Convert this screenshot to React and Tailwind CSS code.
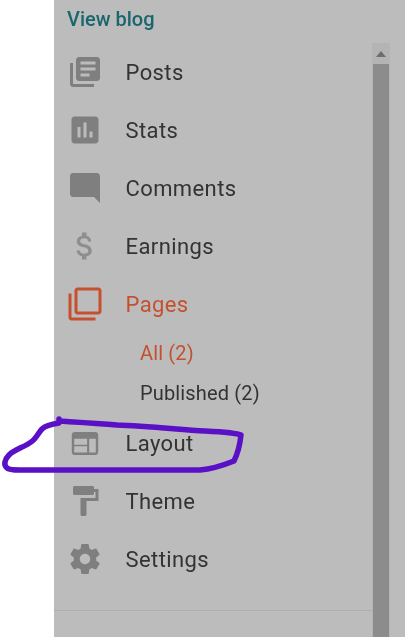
import React from 'react';

const icons = {
  posts: 'M4 6H2v14c0 1.1.9 2 2 2h14v-2H4V6zm16-4H8c-1.1 0-2 .9-2 2v12c0 1.1.9 2 2 2h12c1.1 0 2-.9 2-2V4c0-1.1-.9-2-2-2zm-1 9H9V9h10v2zm-4 4H9v-2h6v2zm4-8H9V5h10v2z',
  stats: 'M19 3H5c-1.1 0-2 .9-2 2v14c0 1.1.9 2 2 2h14c1.1 0 2-.9 2-2V5c0-1.1-.9-2-2-2zM9 17H7v-7h2v7zm4 0h-2V7h2v10zm4 0h-2v-4h2v4z',
  comments: 'M21.99 4c0-1.1-.89-2-1.99-2H4c-1.1 0-2 .9-2 2v12c0 1.1.9 2 2 2h14l4 4-.01-18z',
  earnings: 'M11.8 10.9c-2.27-.59-3-1.2-3-2.15 0-1.09 1.01-1.85 2.7-1.85 1.78 0 2.44.85 2.5 2.1h2.21c-.07-1.72-1.12-3.3-3.21-3.81V3h-3v2.16c-1.94.42-3.5 1.68-3.5 3.61 0 2.31 1.91 3.46 4.7 4.13 2.5.6 3 1.48 3 2.41 0 .69-.49 1.79-2.7 1.79-2.06 0-2.87-.92-2.98-2.1h-2.2c.12 2.19 1.76 3.42 3.68 3.83V21h3v-2.15c1.95-.37 3.5-1.5 3.5-3.55 0-2.84-2.43-3.81-4.7-4.4z',
  pages: 'M3 5H1v16c0 1.1.9 2 2 2h16v-2H3V5zm18-4H7c-1.1 0-2 .9-2 2v14c0 1.1.9 2 2 2h14c1.1 0 2-.9 2-2V3c0-1.1-.9-2-2-2zm0 16H7V3h14v14z',
  layout: 'M5 4.6h14c1 0 1.8.8 1.8 1.8v11.8c0 1-.8 1.8-1.8 1.8H5c-1 0-1.8-.8-1.8-1.8V6.4c0-1 .8-1.8 1.8-1.8zM4.8 9.2v3.9h8.6V9.2H4.8zm10 0v9.2h4.4V9.2h-4.4zM4.8 14.2v4.2h8.6v-4.2H4.8z',
  theme: 'M18 4V3c0-.55-.45-1-1-1H5c-.55 0-1 .45-1 1v4c0 .55.45 1 1 1h12c.55 0 1-.45 1-1V6h1v4H9v11c0 .55.45 1 1 1h2c.55 0 1-.45 1-1v-9h8V4h-3z',
  settings: 'M19.43 12.98c.04-.32.07-.64.07-.98s-.03-.66-.07-.98l2.11-1.65c.19-.15.24-.42.12-.64l-2-3.46c-.12-.22-.39-.3-.61-.22l-2.49 1c-.52-.4-1.08-.73-1.69-.98l-.38-2.65C14.46 2.18 14.25 2 14 2h-4c-.25 0-.46.18-.49.42l-.38 2.65c-.61.25-1.17.59-1.69.98l-2.49-1c-.23-.09-.49 0-.61.22l-2 3.46c-.13.22-.07.49.12.64l2.11 1.65c-.04.32-.07.65-.07.98s.03.66.07.98l-2.11 1.65c-.19.15-.24.42-.12.64l2 3.46c.12.22.39.3.61.22l2.49-1c.52.4 1.08.73 1.69.98l.38 2.65c.03.24.24.42.49.42h4c.25 0 .46-.18.49-.42l.38-2.65c.61-.25 1.17-.59 1.69-.98l2.49 1c.23.09.49 0 .61-.22l2-3.46c.12-.22.07-.49-.12-.64l-2.11-1.65zM12 15.5c-1.93 0-3.5-1.57-3.5-3.5s1.57-3.5 3.5-3.5 3.5 1.57 3.5 3.5-1.57 3.5-3.5 3.5z',
};

const NavItem = ({ icon, label, active }) => (
  <div className="flex items-center h-[58px] pl-[13px]">
    <svg viewBox="0 0 24 24" className={`w-9 h-9 shrink-0 fill-current ${active ? 'text-[#c5502f]' : icon === 'earnings' ? 'text-[#8e8e8e]' : 'text-[#7f7f7f]'}`}>
      <path d={icons[icon]} fillRule="evenodd" />
    </svg>
    <span className={`ml-[22.5px] text-[22px] tracking-[0.4px] ${active ? 'text-[#c5502f]' : 'text-[#333333]'}`}>{label}</span>
  </div>
);

const App = () => {
  return (
    <div className="relative flex w-[405px] h-[638px] bg-white overflow-hidden font-['Roboto',sans-serif] blur-[0.5px]">
      <div className="w-[54px] shrink-0" />
      <div className="flex flex-1 h-[637px] bg-[#bcbcbc]">
        <div className="w-[318px] shrink-0 flex flex-col">
          <div className="h-[43px] flex items-center pl-[13px] pb-[5px] text-[20px] font-medium text-[#1a666e]">View blog</div>
          <NavItem icon="posts" label="Posts" />
          <NavItem icon="stats" label="Stats" />
          <NavItem icon="comments" label="Comments" />
          <NavItem icon="earnings" label="Earnings" />
          <NavItem icon="pages" label="Pages" active />
          <div className="flex items-center h-[39px] pl-[86px] text-[20px] tracking-[0.15px] text-[#c5502f]">All (2)</div>
          <div className="flex items-center h-[41px] pl-[86px] text-[20px] tracking-[0.15px] text-[#333333]">Published (2)</div>
          <div className="h-[1px]" />
          <NavItem icon="layout" label="Layout" />
          <NavItem icon="theme" label="Theme" />
          <NavItem icon="settings" label="Settings" />
          <div className="mt-[22px] border-t border-[#aeaeae]" />
        </div>
        <div className="w-[18px] shrink-0 mt-[43px] flex flex-col bg-[#b4b4b4]">
          <div className="h-[21px] flex items-center justify-center">
            <div className="w-0 h-0 border-x-[5px] border-x-transparent border-b-[6px] border-b-[#6e6e6e]" />
          </div>
          <div className="flex-1 mx-[1px] bg-[#8c8c8c]" />
        </div>
      </div>
      {/* hand drawn marker round the Layout row */}
      <svg viewBox="0 0 405 638" className="absolute inset-0 w-[405px] h-[638px] pointer-events-none">
        <path
          d="M59 419 L59 423 C52 424 46 425 42 429 C38 433 36 439 31 442 C25 447 15 449 9 455 C5 459 3 465 7 468 C9 470 14 470 20 470 C80 470 140 470 200 470 C212 469 224 465 234 461 C238 453 240 444 241 435 C237 433 225 432 205 431 C175 429 145 426 117 425 C95 423 75 422 59 421"
          fill="none"
          stroke="#5a10c6"
          strokeWidth="5.5"
          strokeLinejoin="round"
          strokeLinecap="round"
        />
      </svg>
    </div>
  );
};

export default App;
